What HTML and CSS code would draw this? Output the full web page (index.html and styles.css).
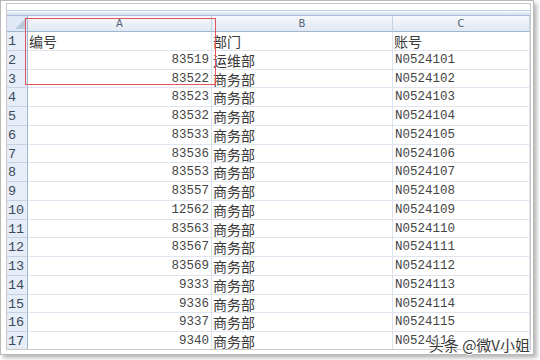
FILE: index.html
```html
<!DOCTYPE html>
<html lang="zh">
<head>
<meta charset="utf-8">
<link rel="stylesheet" href="styles.css">
</head>
<body>
<div class="frame">
  <div class="window">
    <div class="formula"><div class="fx-line"></div><div class="fx-band"></div></div>
    <div class="sheet">
      <div class="corner"></div><div class="colhead">A</div><div class="colhead">B</div><div class="colhead">C</div>
      <div class="rh">1</div><div class="c txt">编号</div><div class="c txt">部门</div><div class="c txt">账号</div>
      <div class="rh">2</div><div class="c num">83519</div><div class="c txt">运维部</div><div class="c mono">N0524101</div>
      <div class="rh">3</div><div class="c num">83522</div><div class="c txt">商务部</div><div class="c mono">N0524102</div>
      <div class="rh">4</div><div class="c num">83523</div><div class="c txt">商务部</div><div class="c mono">N0524103</div>
      <div class="rh">5</div><div class="c num">83532</div><div class="c txt">商务部</div><div class="c mono">N0524104</div>
      <div class="rh">6</div><div class="c num">83533</div><div class="c txt">商务部</div><div class="c mono">N0524105</div>
      <div class="rh">7</div><div class="c num">83536</div><div class="c txt">商务部</div><div class="c mono">N0524106</div>
      <div class="rh">8</div><div class="c num">83553</div><div class="c txt">商务部</div><div class="c mono">N0524107</div>
      <div class="rh">9</div><div class="c num">83557</div><div class="c txt">商务部</div><div class="c mono">N0524108</div>
      <div class="rh">10</div><div class="c num">12562</div><div class="c txt">商务部</div><div class="c mono">N0524109</div>
      <div class="rh">11</div><div class="c num">83563</div><div class="c txt">商务部</div><div class="c mono">N0524110</div>
      <div class="rh">12</div><div class="c num">83567</div><div class="c txt">商务部</div><div class="c mono">N0524111</div>
      <div class="rh">13</div><div class="c num">83569</div><div class="c txt">商务部</div><div class="c mono">N0524112</div>
      <div class="rh">14</div><div class="c num">9333</div><div class="c txt">商务部</div><div class="c mono">N0524113</div>
      <div class="rh">15</div><div class="c num">9336</div><div class="c txt">商务部</div><div class="c mono">N0524114</div>
      <div class="rh">16</div><div class="c num">9337</div><div class="c txt">商务部</div><div class="c mono">N0524115</div>
      <div class="rh">17</div><div class="c num">9340</div><div class="c txt">商务部</div><div class="c mono">N0524116</div>
    </div>
    <div class="sel"></div>
  </div>
  <div class="mark">头条 @微V小姐</div>
</div>
</body>
</html>
```
FILE: styles.css
```css
* { box-sizing: border-box; }
html, body { margin: 0; padding: 0; background: #ffffff; }
body { width: 540px; height: 360px; overflow: hidden; }

.frame {
  position: relative;
  width: 534px;
  height: 355px;
  border: 1px solid #b9b9b9;
  background: #ffffff;
  box-shadow: 3px 3px 4px rgba(0,0,0,0.28);
  padding: 2px 2px 4px 5px;
}

.window {
  position: relative;
  width: 100%;
  height: 100%;
  border: 1px solid #c9c9c9;
  overflow: hidden;
  display: flex;
  flex-direction: column;
}

.formula {
  height: 12px;
  flex: none;
  background: #ffffff;
  display: flex;
  flex-direction: column;
  justify-content: flex-end;
}
.fx-line { height: 1px; background: #b9cbe2; margin-bottom: 1px; }
.fx-band { height: 4px; background: linear-gradient(#e8eef7, #d6e1ef); border-bottom: 1px solid #a7bdd8; }

.sheet {
  flex: 1;
  display: grid;
  grid-template-columns: 21px 184px 181px 1fr;
  grid-template-rows: 16px repeat(17, 18.75px);
  overflow: hidden;
  font-family: "Liberation Mono", "DejaVu Sans Mono", monospace;
}

.corner {
  background: #dfe8f4;
  border-right: 1px solid #9eb6ce;
  border-bottom: 1px solid #9eb6ce;
  position: relative;
}
.corner::after {
  content: "";
  position: absolute;
  right: 2px;
  bottom: 2px;
  border-left: 10px solid transparent;
  border-bottom: 10px solid #b9c9dc;
}

.colhead {
  background: linear-gradient(#f6f8fb, #e2e9f3);
  border-right: 1px solid #c6d3e3;
  border-bottom: 1px solid #9eb6ce;
  font-family: "DejaVu Sans", sans-serif;
  font-size: 10px;
  color: #4e5f76;
  text-align: center;
  line-height: 15px;
}

.rh {
  background: #e6edf7;
  border-right: 1px solid #9eb6ce;
  border-bottom: 1px solid #c4d2e4;
  font-size: 13.5px;
  color: #3c4a5e;
  padding-left: 1px;
  line-height: 19px;
}

.c {
  border-right: 1px solid #dde3ec;
  border-bottom: 1px solid #dfe5ee;
  color: #3a3a3a;
  white-space: nowrap;
  line-height: 19px;
}
.num { text-align: right; padding-right: 2px; font-size: 12.5px; color: #454545; }
.mono { padding-left: 2px; font-size: 12.5px; color: #454545; }
.txt {
  padding-left: 1px;
  font-family: "Noto Sans CJK SC", sans-serif;
  font-size: 14px;
  line-height: 18px;
  color: #3a3a3a;
}

.sel {
  position: absolute;
  left: 18px;
  top: 14px;
  width: 191px;
  height: 67px;
  border: 1.5px solid #e2555f;
}

.mark {
  position: absolute;
  right: 3px;
  bottom: 0px;
  font-family: "Noto Sans CJK SC", sans-serif;
  font-size: 15px;
  line-height: 18px;
  color: #3a3a3a;
  text-shadow: 1px 0 0 #fff, -1px 0 0 #fff, 0 1px 0 #fff, 0 -1px 0 #fff;
}
```
